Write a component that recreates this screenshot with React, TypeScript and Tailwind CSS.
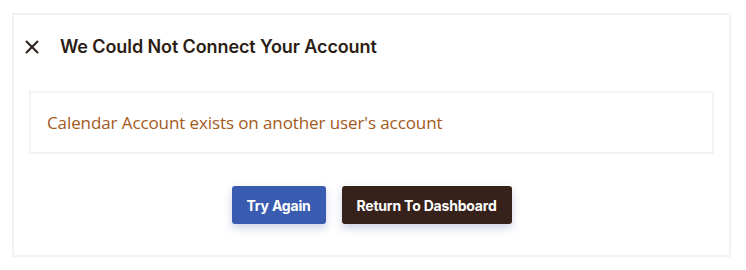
import { X } from 'lucide-react';

export default function App() {
  return (
    <div className="w-[746px] h-[270px] bg-white pt-[13px] pl-[12px]">
      <div className="w-[719px] h-[244px] border-2 border-[#f2f2f2] px-[15px] flex flex-col">
        <div className="flex items-center h-[63px]">
          <X className="w-[22px] h-[22px] text-[#2d2019] -ml-[8px]" strokeWidth={2.2} />
          <h2 className="ml-[17px] text-[18px] font-semibold text-[#2b1d14] font-[family-name:Inter,sans-serif] tracking-[-0.1px]">
            We Could Not Connect Your Account
          </h2>
        </div>
        <div className="mt-[13px] h-[63px] border-2 border-[#f4f4f4] flex items-center px-[16px]">
          <p className="text-[17px] text-[#a35a1c] font-[family-name:'Open_Sans',sans-serif] tracking-[-0.1px]">
            Calendar Account exists on another user's account
          </p>
        </div>
        <div className="mt-[32px] flex justify-center gap-4">
          <button className="w-[94px] h-[38px] rounded-[3px] bg-[#3a5cb0] text-white text-[14px] font-bold font-[family-name:Inter,sans-serif] tracking-[-0.2px] shadow-[0_4px_8px_rgba(60,70,160,0.25)]">
            Try Again
          </button>
          <button className="w-[170px] h-[38px] rounded-[3px] bg-[#36221a] text-white text-[14px] font-bold font-[family-name:Inter,sans-serif] tracking-[-0.2px] shadow-[0_4px_8px_rgba(60,70,160,0.25)]">
            Return To Dashboard
          </button>
        </div>
      </div>
    </div>
  );
}
